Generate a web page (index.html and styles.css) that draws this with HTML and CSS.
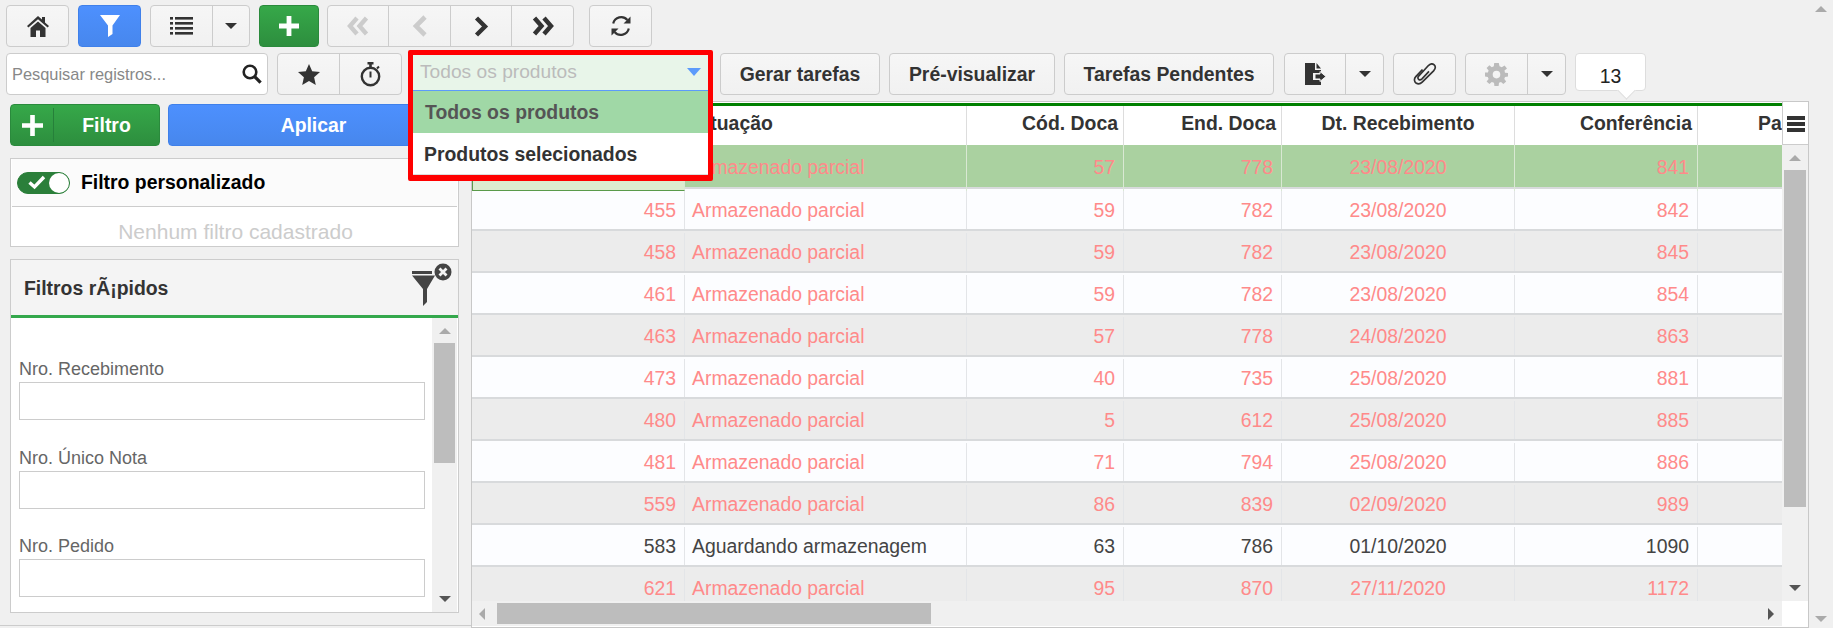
FILE: index.html
```html
<!DOCTYPE html>
<html lang="pt-BR">
<head>
  <meta charset="UTF-8" />
  <title>Recebimento</title>
  <link rel="stylesheet" href="styles.css">
</head>
<body>

  <div class="conteudo">

    <!-- Primeira barra -->
    <div class="barra">
      <a class="btn w63"><svg width="22" height="21" viewBox="0 0 22 21"><path fill="#333" d="M11 0 L15 3.6 V1 H18 V6.4 L22 10 L20.6 11.6 L11 3.2 L1.4 11.6 L0 10 Z M3.5 12 L11 5.4 L18.5 12 V21 H13 V14.5 H9 V21 H3.5 Z"/></svg></a>
      <a class="btn btn-azul w63"><svg width="20" height="22" viewBox="0 0 20 22"><path fill="#fff" d="M0 0 H20 L12.5 10.5 V19 L8 22 V10.5 Z"/></svg></a>
      <div class="grupo w100">
        <a class="seg w62"><svg width="23" height="18" viewBox="0 0 23 18"><g fill="#333"><rect x="0" y="0" width="3" height="2.6"/><rect x="5" y="0" width="18" height="2.6"/><rect x="0" y="5" width="3" height="2.6"/><rect x="5" y="5" width="18" height="2.6"/><rect x="0" y="10" width="3" height="2.6"/><rect x="5" y="10" width="18" height="2.6"/><rect x="0" y="15" width="3" height="2.6"/><rect x="5" y="15" width="18" height="2.6"/></g></svg></a>
        <a class="seg cresce"><i class="seta baixo escura"></i></a>
      </div>
      <a class="btn btn-verde w60"><svg width="20" height="20" viewBox="0 0 20 20"><path fill="#fff" d="M7.6 0 H12.4 V7.6 H20 V12.4 H12.4 V20 H7.6 V12.4 H0 V7.6 H7.6 Z"/></svg></a>
      <div class="grupo w247 nav-reg">
        <a class="seg w61"><svg width="22" height="20" viewBox="0 0 22 20"><path fill="none" stroke="#ccc" stroke-width="4.4" d="M10 2 L3 10 L10 18 M19.5 2 L12.5 10 L19.5 18"/></svg></a>
        <a class="seg w62"><svg width="16" height="22" viewBox="0 0 16 22"><path fill="none" stroke="#ccc" stroke-width="4.6" d="M13 2 L4 11 L13 20"/></svg></a>
        <a class="seg w61"><svg width="15" height="21" viewBox="0 0 15 21"><path fill="none" stroke="#333" stroke-width="4.4" d="M2.5 2 L11 10.5 L2.5 19"/></svg></a>
        <a class="seg cresce"><svg width="22" height="20" viewBox="0 0 22 20"><path fill="none" stroke="#333" stroke-width="4.4" d="M2.5 2 L9.5 10 L2.5 18 M12 2 L19 10 L12 18"/></svg></a>
      </div>
      <a class="btn w63 btn-atualiza"><svg width="22" height="22" viewBox="0 0 22 22"><g fill="none" stroke="#333" stroke-width="2.2"><path d="M3.2 8.5 A8.2 8.2 0 0 1 17.4 5"/><path d="M18.8 13.5 A8.2 8.2 0 0 1 4.6 17"/></g><path fill="#333" d="M20.5 1.5 V8.5 H13.5 Z M1.5 20.5 V13.5 H8.5 Z"/></svg></a>
    </div>

    <!-- Segunda barra -->
    <div class="barra barra-2">
      <div class="busca">
        <input class="busca-campo" type="text" placeholder="Pesquisar registros...">
        <svg width="20" height="20" viewBox="0 0 20 20"><circle cx="8" cy="8" r="6.3" fill="none" stroke="#222" stroke-width="2.6"/><path stroke="#222" stroke-width="3.2" d="M12.5 12.5 L18.6 18.6"/></svg>
      </div>
      <div class="grupo w125">
        <a class="seg w62"><svg width="22" height="21" viewBox="0 0 22 21"><path fill="#333" d="M11 0 L14.2 7.2 L22 8 L16.1 13.2 L17.8 21 L11 17 L4.2 21 L5.9 13.2 L0 8 L7.8 7.2 Z"/></svg></a>
        <a class="seg cresce"><svg width="22" height="25" viewBox="0 0 22 25"><g fill="none" stroke="#333"><circle cx="10.5" cy="14.5" r="8.7" stroke-width="2.4"/><path stroke-width="2" d="M10.5 9.5 V15.5"/><path stroke-width="2.6" d="M7.5 1.3 H13.5 M10.5 1.5 V5"/><path stroke-width="2" d="M17 6.5 L19 4.5"/></g></svg></a>
      </div>

      <div class="combo">
        <div class="combo-caixa">
          <div class="combo-campo">
            <span>Todos os produtos</span>
            <i class="seta baixo azul"></i>
          </div>
          <div class="combo-op ativa">Todos os produtos</div>
          <div class="combo-op op-ultima">Produtos selecionados</div>
        </div>
      </div>

      <a class="btn w160 ml7">Gerar tarefas</a>
      <a class="btn w166">Pré-visualizar</a>
      <a class="btn w210">Tarefas Pendentes</a>
      <div class="grupo w100 ml10">
        <a class="seg w61"><svg width="21" height="22" viewBox="0 0 21 22"><path fill="#333" d="M0 0 H10 V7 H16 V10 H8 V17 H16 V22 H0 Z M11.5 0 L16 5.5 H11.5 Z"/><path fill="#333" d="M10 11 H15 V8.5 L21 13.5 L15 18.5 V16 H10 Z" stroke="#f4f4f4" stroke-width="1"/></svg></a>
        <a class="seg cresce"><i class="seta baixo escura"></i></a>
      </div>
      <a class="btn w63"><svg width="24" height="22" viewBox="0 0 24 22"><path fill="none" stroke="#333" stroke-width="1.7" d="M9.5 6.5 L2.8 13.6 C0.6 16 1.4 18.8 3 20 C5 21.4 7.4 21 9.2 19.2 L20.6 7.8 C23 5.2 22.6 3 21 1.7 C19.2 0.4 17 0.8 15.2 2.8 L5.6 13.2 C4.4 14.6 5 16 5.8 16.5 C6.8 17.2 8 16.8 9 15.8 L16 8.4"/></svg></a>
      <div class="grupo w101">
        <a class="seg w62"><svg width="23" height="23" viewBox="0 0 23 23"><path fill="#bbb" fill-rule="evenodd" d="M9.2 0 H13.8 L14.5 3.2 L16.8 4.2 L19.6 2.4 L22 5.6 L19.5 7.6 L20 9.7 L23 10 V13.6 L20 14 L19.3 16 L21.2 18.6 L18.4 21 L16 19 L14 19.8 L13.6 23 H9.4 L9 19.8 L6.8 19 L4.4 21 L1.6 18.4 L3.6 16 L2.8 14 L0 13.6 V9.6 L2.9 9.4 L3.6 7.4 L1.6 5 L4.4 2.2 L6.8 4.2 L8.8 3.2 Z M11.5 7.8 A3.8 3.8 0 1 0 11.5 15.4 A3.8 3.8 0 1 0 11.5 7.8 Z"/></svg></a>
        <a class="seg cresce"><i class="seta baixo escura"></i></a>
      </div>
      <div class="balao">13</div>
    </div>

    <div class="principal">

      <!-- Coluna de filtros -->
      <aside class="lateral">
        <div class="lateral-acoes">
          <a class="btn btn-verde btn-filtro">
            <span class="filtro-mais"><svg width="21" height="21" viewBox="0 0 20 20"><path fill="#fff" d="M7.8 0 H12.2 V7.8 H20 V12.2 H12.2 V20 H7.8 V12.2 H0 V7.8 H7.8 Z"/></svg></span>
            <span class="filtro-txt">Filtro</span>
          </a>
          <a class="btn btn-azul btn-aplicar">Aplicar</a>
        </div>

        <div class="painel">
          <div class="painel-linha">
            <span class="chave"><svg width="18" height="15" viewBox="0 0 18 15"><path fill="none" stroke="#fff" stroke-width="3.4" d="M1.5 7.5 L6.5 12 L16 2"/></svg><i class="chave-bola"></i></span>
            <b>Filtro personalizado</b>
          </div>
          <div class="painel-vazio">Nenhum filtro cadastrado</div>
        </div>

        <div class="painel painel-rapido">
          <div class="rapido-topo">
            <b>Filtros rÃ¡pidos</b>
            <svg width="42" height="43" viewBox="0 0 42 43"><g fill="#444"><rect x="1" y="8" width="20" height="3"/><path d="M1 12.5 H24 L16 26 V39 L12 43 V26 Z"/><circle cx="32" cy="9" r="8.5"/></g><path stroke="#f4f4f4" stroke-width="2.8" d="M28.5 5.5 L35.5 12.5 M35.5 5.5 L28.5 12.5"/></svg>
          </div>
          <div class="rapido-corpo">
            <form class="campos">
              <label class="campo">Nro. Recebimento<input type="text"></label>
              <label class="campo">Nro. Único Nota<input type="text"></label>
              <label class="campo">Nro. Pedido<input type="text"></label>
            </form>
            <div class="vbar vbar-painel">
              <i class="seta cima clara"></i>
              <div class="vbar-trilho"><div class="vbar-cursor cursor-painel"></div></div>
              <i class="seta baixo media"></i>
            </div>
          </div>
        </div>
      </aside>

      <!-- Grade de dados -->
      <section class="grade">
        <div class="grade-cab">
          <div class="cab-colunas colunas">
            <div class="cab"></div>
            <div class="cab esq">Situação</div>
            <div class="cab dir">Cód. Doca</div>
            <div class="cab dir">End. Doca</div>
            <div class="cab meio">Dt. Recebimento</div>
            <div class="cab dir">Conferência</div>
            <div class="cab cab-corte">Pa</div>
          </div>
          <div class="cab-menu"><svg width="18" height="16" viewBox="0 0 18 16"><g fill="#333"><rect width="18" height="4"/><rect y="6" width="18" height="4"/><rect y="12" width="18" height="4"/></g></svg></div>
        </div>

        <div class="grade-meio">
          <div class="linhas">
            <div class="linha colunas selecionada parcial"><div class="cel dir cel-atual">452</div><div class="cel esq">Armazenado parcial</div><div class="cel dir">57</div><div class="cel dir">778</div><div class="cel meio">23/08/2020</div><div class="cel dir">841</div><div class="cel"></div></div>
            <div class="linha colunas parcial"><div class="cel dir">455</div><div class="cel esq">Armazenado parcial</div><div class="cel dir">59</div><div class="cel dir">782</div><div class="cel meio">23/08/2020</div><div class="cel dir">842</div><div class="cel"></div></div>
            <div class="linha colunas par parcial"><div class="cel dir">458</div><div class="cel esq">Armazenado parcial</div><div class="cel dir">59</div><div class="cel dir">782</div><div class="cel meio">23/08/2020</div><div class="cel dir">845</div><div class="cel"></div></div>
            <div class="linha colunas parcial"><div class="cel dir">461</div><div class="cel esq">Armazenado parcial</div><div class="cel dir">59</div><div class="cel dir">782</div><div class="cel meio">23/08/2020</div><div class="cel dir">854</div><div class="cel"></div></div>
            <div class="linha colunas par parcial"><div class="cel dir">463</div><div class="cel esq">Armazenado parcial</div><div class="cel dir">57</div><div class="cel dir">778</div><div class="cel meio">24/08/2020</div><div class="cel dir">863</div><div class="cel"></div></div>
            <div class="linha colunas parcial"><div class="cel dir">473</div><div class="cel esq">Armazenado parcial</div><div class="cel dir">40</div><div class="cel dir">735</div><div class="cel meio">25/08/2020</div><div class="cel dir">881</div><div class="cel"></div></div>
            <div class="linha colunas par parcial"><div class="cel dir">480</div><div class="cel esq">Armazenado parcial</div><div class="cel dir">5</div><div class="cel dir">612</div><div class="cel meio">25/08/2020</div><div class="cel dir">885</div><div class="cel"></div></div>
            <div class="linha colunas parcial"><div class="cel dir">481</div><div class="cel esq">Armazenado parcial</div><div class="cel dir">71</div><div class="cel dir">794</div><div class="cel meio">25/08/2020</div><div class="cel dir">886</div><div class="cel"></div></div>
            <div class="linha colunas par parcial"><div class="cel dir">559</div><div class="cel esq">Armazenado parcial</div><div class="cel dir">86</div><div class="cel dir">839</div><div class="cel meio">02/09/2020</div><div class="cel dir">989</div><div class="cel"></div></div>
            <div class="linha colunas"><div class="cel dir">583</div><div class="cel esq">Aguardando armazenagem</div><div class="cel dir">63</div><div class="cel dir">786</div><div class="cel meio">01/10/2020</div><div class="cel dir">1090</div><div class="cel"></div></div>
            <div class="linha colunas par parcial"><div class="cel dir">621</div><div class="cel esq">Armazenado parcial</div><div class="cel dir">95</div><div class="cel dir">870</div><div class="cel meio">27/11/2020</div><div class="cel dir">1172</div><div class="cel"></div></div>
          </div>
          <div class="vbar vbar-grade">
            <i class="seta cima clara"></i>
            <div class="vbar-trilho"><div class="vbar-cursor cursor-grade"></div></div>
            <i class="seta baixo media"></i>
          </div>
        </div>

        <div class="grade-rodape">
          <div class="hbar">
            <i class="seta esquerda clara"></i>
            <div class="hbar-trilho"><div class="hbar-cursor"></div></div>
            <i class="seta direita media"></i>
          </div>
          <div class="hbar-canto"></div>
        </div>
      </section>
    </div>
  </div>

  <!-- Rolagem da janela -->
  <div class="rolagem">
    <i class="seta cima clara"></i>
    <i class="seta baixo clara"></i>
  </div>

</body>
</html>
```

FILE: styles.css
```css
* {
  margin: 0;
  padding: 0;
  box-sizing: border-box;
}

html, body {
  height: 628px;
  overflow: hidden;
  font-family: "Liberation Sans", Arial, sans-serif;
  font-size: 19.4px;
  color: #333;
  background: #f0f0f0;
}

body {
  display: flex;
}

.conteudo {
  width: 1809px;
  flex-shrink: 0;
}

/* Barras de botoes */
.barra {
  display: flex;
  gap: 9px;
  height: 42px;
  margin-top: 5px;
  padding-left: 6px;
}

.barra-2 {
  margin-top: 6px;
}

.btn,
.grupo {
  height: 42px;
  border: 1px solid #ccc;
  border-radius: 4px;
  background: linear-gradient(#f6f6f6, #f1f1f1);
}

.btn {
  display: flex;
  align-items: center;
  justify-content: center;
  font-weight: bold;
  color: #333;
  cursor: pointer;
}

.btn-azul {
  border-color: #3f80ea;
  background: linear-gradient(#4d90fe, #4787ed);
  color: #fff;
}

.btn-verde {
  border-color: #2a8a3c;
  background: linear-gradient(#36a849, #2d8e3e);
  color: #fff;
}

.grupo {
  display: flex;
}

.seg {
  display: flex;
  align-items: center;
  justify-content: center;
  border-right: 1px solid #ccc;
  cursor: pointer;
}

.cresce {
  flex: 1;
  border-right: 0;
}

.w60 { width: 60px; }
.w61 { width: 61px; }
.w62 { width: 62px; }
.w63 { width: 63px; }
.w100 { width: 100px; }
.w101 { width: 101px; }
.w125 { width: 125px; }
.w160 { width: 160px; }
.w166 { width: 166px; }
.w210 { width: 210px; }
.w247 { width: 247px; }

.nav-reg { margin-left: -1px; }
.btn-atualiza { margin-left: 6px; }
.ml7 { margin-left: -2px; }
.ml10 { margin-left: 1px; }

/* Setas feitas com borda */
.seta {
  display: block;
  width: 0;
  height: 0;
  flex-shrink: 0;
  border-style: solid;
  border-color: transparent;
}

.seta.baixo {
  border-width: 6px 6px 0;
  border-top-color: var(--cor);
}

.seta.cima {
  border-width: 0 6px 6px;
  border-bottom-color: var(--cor);
}

.seta.esquerda {
  border-width: 6px 6px 6px 0;
  border-right-color: var(--cor);
}

.seta.direita {
  border-width: 6px 0 6px 6px;
  border-left-color: var(--cor);
}

.escura { --cor: #333; }
.media { --cor: #555; }
.clara { --cor: #aaa; }
.azul { --cor: #5c9bfb; }

.seta.azul {
  border-width: 8px 7px 0;
}

/* Busca */
.busca {
  display: flex;
  align-items: center;
  width: 262px;
  height: 42px;
  padding-right: 5px;
  background: #fff;
  border: 1px solid #ccc;
  border-radius: 4px;
}

.busca-campo {
  flex: 1;
  min-width: 0;
  height: 100%;
  padding-left: 5px;
  border: 0;
  outline: 0;
  background: none;
  font-family: inherit;
  font-size: 16.4px;
}

.busca-campo::placeholder {
  color: #888;
  opacity: 1;
}

/* Combo aberto, com o destaque vermelho por cima da tela */
.combo {
  position: relative;
  width: 305px;
  margin-left: -3px;
  height: 42px;
}

.combo-caixa {
  position: absolute;
  top: -3px;
  left: 0;
  z-index: 10;
  width: 305px;
  background: #fff;
  border: 5px solid #f00;
  border-bottom-width: 6px;
  border-radius: 2px;
}

.combo-campo {
  display: flex;
  align-items: center;
  justify-content: space-between;
  height: 36px;
  padding: 0 7px 2px;
  background: #e8f5e9;
  border-bottom: 1px solid #5c9bfb;
  font-size: 19.2px;
  color: #bbb;
}

.combo-op {
  height: 42px;
  padding-left: 12px;
  line-height: 43px;
  font-size: 19.4px;
  font-weight: bold;
}

.combo-op.ativa {
  background: #a0d8a6;
  color: #555;
}

.op-ultima {
  padding-left: 11px;
  line-height: 42px;
  border-bottom: 1px solid #ddd;
}

.balao {
  position: relative;
  width: 71px;
  height: 38px;
  padding-top: 10px;
  line-height: 24px;
  text-align: center;
  color: #222;
  background: #fff;
  border: 1px solid #ddd;
  border-radius: 4px;
}

.balao::after {
  content: "";
  position: absolute;
  right: 12px;
  bottom: -7px;
  width: 12px;
  height: 12px;
  background: #fff;
  border-right: 1px solid #ddd;
  border-bottom: 1px solid #ddd;
  transform: rotate(45deg);
}

/* Area principal */
.principal {
  display: flex;
  margin-top: 6px;
  height: 527px;
}

.lateral {
  width: 471px;
  height: 525px;
  flex-shrink: 0;
  padding: 3px 12px 0 10px;
  border-bottom: 1px solid #ccc;
}

.lateral-acoes {
  display: flex;
  gap: 8px;
}

.btn-filtro {
  width: 150px;
  justify-content: flex-start;
}

.filtro-mais {
  display: flex;
  align-items: center;
  justify-content: center;
  width: 43px;
  height: 34px;
  border-right: 1px solid #26803a;
}

.filtro-txt {
  flex: 1;
  text-align: center;
}

.btn-aplicar {
  flex: 1;
}

.painel {
  margin-top: 12px;
  background: #fff;
  border: 1px solid #ccc;
}

.painel-linha {
  display: flex;
  align-items: center;
  gap: 11px;
  height: 48px;
  margin: 0 1px;
  padding-left: 5px;
  background: #fbfbfb;
  border-bottom: 1px solid #ccc;
  color: #000;
}

.painel-vazio {
  height: 39px;
  padding: 11px 0 0 2px;
  line-height: 28px;
  text-align: center;
  font-size: 21px;
  color: #ccc;
}

/* Chave ligada */
.chave {
  position: relative;
  display: flex;
  align-items: center;
  width: 53px;
  height: 22px;
  padding-left: 10px;
  background: #2b7f3a;
  border: 1px solid #2b7f3a;
  border-radius: 11px;
}

.chave-bola {
  position: absolute;
  top: 0;
  right: 0;
  width: 20px;
  height: 20px;
  background: #fff;
  border-radius: 50%;
}

.painel-rapido {
  height: 354px;
}

.rapido-topo {
  display: flex;
  align-items: flex-start;
  justify-content: space-between;
  height: 58px;
  padding: 3px 5px 0 13px;
  background: #f4f4f4;
  border-bottom: 3px solid #34a84c;
}

.rapido-topo b {
  margin-top: 13px;
  line-height: 24px;
}

.rapido-corpo {
  display: flex;
  height: 294px;
  overflow: hidden;
}

.campos {
  flex: 1;
  padding: 40px 6px 0 8px;
}

.campo {
  display: block;
  margin-bottom: 26.5px;
  font-size: 18px;
  line-height: 22px;
  color: #666;
}

.campo input {
  display: block;
  width: 406px;
  height: 38px;
  margin-top: 2px;
  background: #fff;
  border: 1px solid #ccc;
  outline: 0;
}

/* Barras de rolagem */
.vbar {
  display: flex;
  flex-direction: column;
  align-items: center;
  background: #f0f0f0;
}

.vbar-trilho {
  flex: 1;
  width: 100%;
}

.vbar-cursor {
  background: #bdbdbd;
}

.vbar-painel {
  width: 25px;
  margin-right: 1px;
  padding: 10px 0 10px;
}

.vbar-painel .vbar-trilho {
  padding: 0 2px;
}

.cursor-painel {
  height: 120px;
  margin-top: 9px;
}

.vbar-grade {
  width: 26px;
  padding: 10px 0 10px;
}

.vbar-grade .vbar-trilho {
  padding: 0 2px;
}

.cursor-grade {
  height: 337px;
  margin-top: 9px;
}

/* Grade */
.grade {
  width: 338px;
  flex: 1;
  height: 527px;
  background: #fff;
  border: 1px solid #c8c8c8;
}

.colunas {
  display: grid;
  grid-template-columns: 213px 282px 157px 158px 233px 183px 84px;
  width: 1310px;
}

.grade-cab {
  display: flex;
  height: 43px;
}

.cab-colunas {
  margin-top: 1px;
  border-top: 3px solid #008000;
}

.cab {
  overflow: hidden;
  line-height: 35px;
  font-weight: bold;
  white-space: nowrap;
  border-right: 1px solid #ddd;
}

.cab.dir { padding-right: 5px; }
.cab.esq { padding-left: 7px; }

.cab-corte {
  padding-left: 60px;
  border-right: 0;
}

.cab-menu {
  display: flex;
  align-items: center;
  justify-content: center;
  width: 26px;
  padding-top: 2px;
  border-left: 1px solid #ccc;
  border-bottom: 1px solid #ccc;
}

.dir { text-align: right; }
.meio { text-align: center; }
.esq { text-align: left; }

.grade-meio {
  display: flex;
  height: 456px;
}

.linhas {
  width: 1310px;
  overflow: hidden;
}

.linha {
  height: 42px;
  padding-top: 2px;
  background: #fcfdff;
  border-bottom: 2px solid #d8dadc;
  color: #444;
}

.linha.par {
  background: #ececec;
}

.linha.parcial {
  color: #ff8a8a;
}

.linha.selecionada {
  height: 44px;
  padding-top: 0;
  background: #aad1a0;
}

.cel {
  line-height: 38px;
  white-space: nowrap;
  border-right: 1px solid #e3e5e8;
}

.cel.dir { padding-right: 8px; }
.cel.esq { padding-left: 7px; }

.selecionada .cel {
  line-height: 44px;
  border-right-color: #d9e8d3;
}

.cel-atual {
  background: #dcecd0;
  border: 1px solid #5a9a4a;
}

.cel:last-child {
  border-right: 0;
}

.grade-rodape {
  display: flex;
  height: 26px;
}

.hbar {
  display: flex;
  align-items: center;
  gap: 6px;
  width: 1310px;
  height: 25px;
  padding: 0 8px 0 7px;
  background: #f0f0f0;
}

.hbar-trilho {
  flex: 1;
  padding-left: 6px;
}

.hbar-cursor {
  width: 434px;
  height: 21px;
  background: #bdbdbd;
}

.hbar-canto {
  flex: 1;
  background: #fff;
}

/* Rolagem da janela */
.rolagem {
  flex: 1;
  display: flex;
  flex-direction: column;
  align-items: center;
  justify-content: space-between;
  height: 622px;
  padding: 6px 0 0;
}
```
